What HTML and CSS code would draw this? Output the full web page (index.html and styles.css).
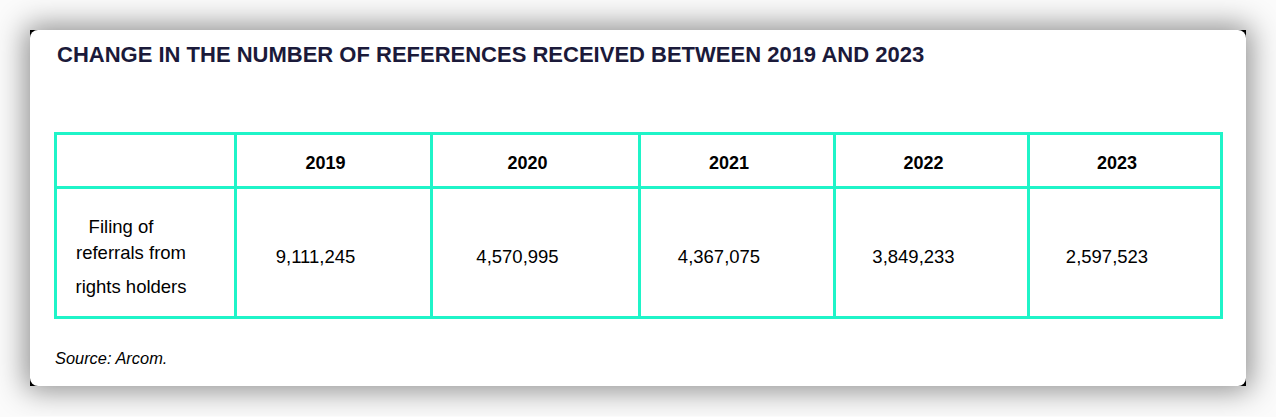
FILE: index.html
```html
<!DOCTYPE html>
<html lang="en">
<head>
<meta charset="utf-8">
<title>Change in the number of references</title>
<link rel="stylesheet" href="styles.css">
</head>
<body>
<div class="frame">
  <section class="card">
    <h2 class="title">CHANGE IN THE NUMBER OF REFERENCES RECEIVED BETWEEN 2019 AND 2023</h2>
    <table class="data">
      <thead>
        <tr>
          <th class="c1"></th>
          <th class="c2">2019</th>
          <th class="c3">2020</th>
          <th class="c4">2021</th>
          <th class="c5">2022</th>
          <th class="c6">2023</th>
        </tr>
      </thead>
      <tbody>
        <tr>
          <td class="label">
            <span class="l1">Filing of</span>
            <span class="l2">referrals from</span>
            <span class="l3">rights holders</span>
          </td>
          <td>9,111,245</td>
          <td>4,570,995</td>
          <td>4,367,075</td>
          <td>3,849,233</td>
          <td>2,597,523</td>
        </tr>
      </tbody>
    </table>
    <p class="source">Source: Arcom.</p>
  </section>
</div>
</body>
</html>
```

FILE: styles.css
```css
html, body {
  margin: 0;
  padding: 0;
}
body {
  background: #fbfbfb;
  padding: 30px;
  font-family: "Liberation Sans", Arial, sans-serif;
}
.frame {
  width: 1216px;
  height: 356px;
  background: #000;
  box-shadow: 0 0 28px 4px rgba(0, 0, 0, 0.45);
}
.card {
  box-sizing: border-box;
  width: 1216px;
  height: 356px;
  background: #fff;
  border-radius: 8px;
  padding: 12px 23px 0 24px;
}
.title {
  margin: 0 0 0 3px;
  font-size: 22px;
  line-height: 25px;
  font-weight: 700;
  color: #1b1a3a;
}
.data {
  margin-top: 65px;
  width: 1169px;
  table-layout: fixed;
  border-collapse: separate;
  border-spacing: 0;
  border-top: 3px solid #1ff4c8;
  border-left: 3px solid #1ff4c8;
  color: #000;
  font-size: 18px;
}
.data th, .data td {
  box-sizing: border-box;
  border-right: 3px solid #1ff4c8;
  border-bottom: 3px solid #1ff4c8;
  text-align: center;
  vertical-align: middle;
}
.data th {
  height: 54px;
  padding: 5px 16px 0 0;
  font-weight: 700;
}
.data td {
  height: 130px;
  padding: 8px 36px 0 0;
  font-size: 18.5px;
  font-weight: 400;
}
.c1 { width: 180px; }
.c2 { width: 196px; }
.c3 { width: 208px; }
.c4 { width: 195px; }
.c5 { width: 194px; }
.c6 { width: 193px; }
.data td.label {
  padding: 8px 29px 0 0;
  line-height: 26px;
}
.label span {
  display: block;
}
.label .l1 {
  padding-right: 20px;
}
.label .l3 {
  margin-top: 8px;
}
.source {
  margin: 30px 0 0 1px;
  font-size: 16.4px;
  font-style: italic;
  color: #000;
}
```
